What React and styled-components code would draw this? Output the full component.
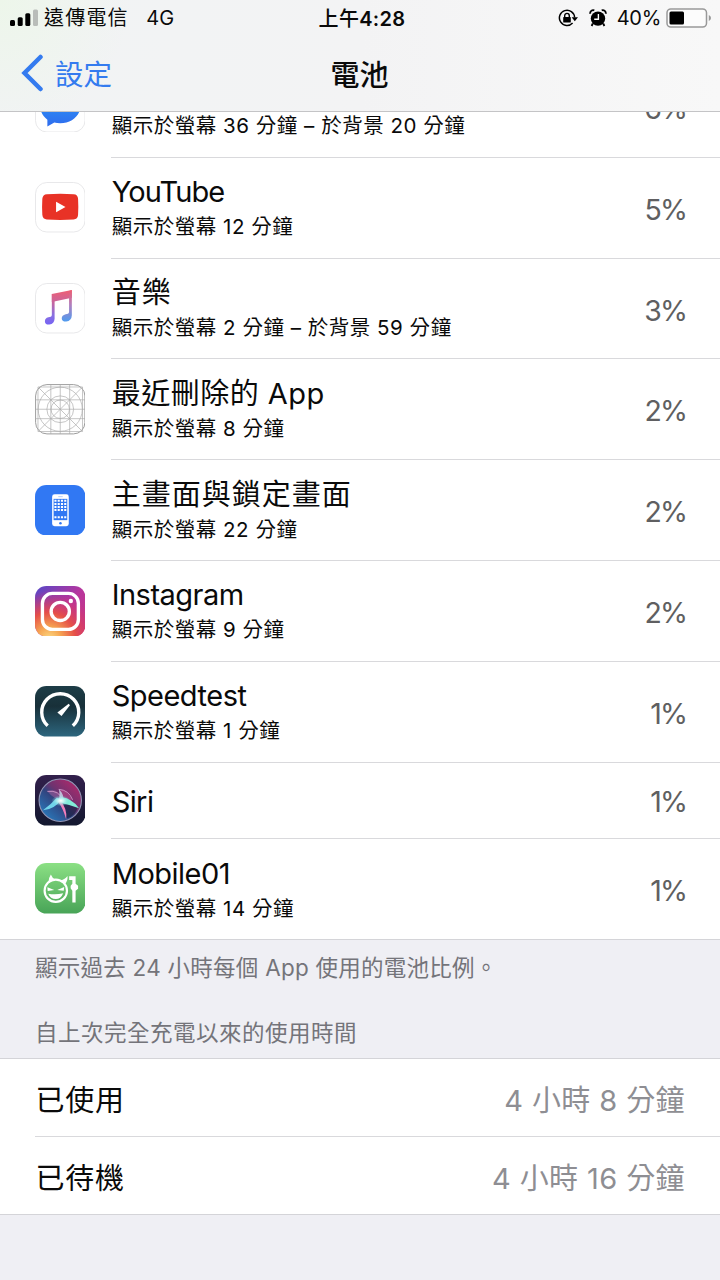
import styled, { createGlobalStyle } from "styled-components";

const GlobalStyle = createGlobalStyle`
  * {
    box-sizing: border-box;
  }
  body {
    margin: 0;
    background: #efeff4;
    font-family: Inter, "Noto Sans CJK TC", sans-serif;
    color: #0a0a0a;
  }
`;

const apps = [
  { icon: "messenger", name: "Messenger", detail: "顯示於螢幕 36 分鐘 – 於背景 20 分鐘", percent: "6%", tracking: -0.5 },
  { icon: "youtube", name: "YouTube", detail: "顯示於螢幕 12 分鐘", percent: "5%", tracking: -0.9 },
  { icon: "music", name: "音樂", detail: "顯示於螢幕 2 分鐘 – 於背景 59 分鐘", percent: "3%", tracking: 1 },
  { icon: "grid", name: "最近刪除的 App", detail: "顯示於螢幕 8 分鐘", percent: "2%", tracking: 0.5 },
  { icon: "home", name: "主畫面與鎖定畫面", detail: "顯示於螢幕 22 分鐘", percent: "2%", tracking: 1 },
  { icon: "instagram", name: "Instagram", detail: "顯示於螢幕 9 分鐘", percent: "2%", tracking: -0.5 },
  { icon: "speedtest", name: "Speedtest", detail: "顯示於螢幕 1 分鐘", percent: "1%", tracking: -0.5 },
  { icon: "siri", name: "Siri", percent: "1%", tracking: -0.6 },
  { icon: "mobile01", name: "Mobile01", detail: "顯示於螢幕 14 分鐘", percent: "1%", tracking: -0.5 },
];

const usage = [
  { label: "已使用", value: "4 小時 8 分鐘" },
  { label: "已待機", value: "4 小時 16 分鐘" },
];

const Outline = () => (
  <rect x="0.5" y="0.5" width="50" height="50" rx="11.5" fill="#fff" stroke="#e8e8ea" />
);

const drawings = {
  messenger: (
    <>
      <defs>
        <linearGradient id="msg" x1="0" y1="0" x2="0" y2="1">
          <stop offset="0" stopColor="#2aa5f8" />
          <stop offset="1" stopColor="#2f6bee" />
        </linearGradient>
      </defs>
      <Outline />
      <path
        d="M25.500 5C14 5 5 13 5 23.500C5 29.500 8 34.500 12.500 38V45L19.500 41Q22 41.600 25.500 41.600C37 41.600 46 34 46 23.500C46 13 37 5 25.500 5Z"
        fill="url(#msg)"
      />
      <path d="M14 29L23 19L28 24L37 19L28 29L23 24Z" fill="#fff" />
    </>
  ),
  youtube: (
    <>
      <Outline />
      <path
        d="M12 12.300Q25.500 11.300 39 12.300Q43.200 12.500 43.500 17Q44 25 43.500 33Q43.200 37.500 39 37.800Q25.500 38.800 12 37.800Q7.800 37.500 7.400 33Q6.900 25 7.400 17Q7.800 12.500 12 12.300Z"
        fill="#e83226"
      />
      <path d="M21.300 20V30.500L30.800 25.200Z" fill="#fff" />
    </>
  ),
  music: (
    <>
      <defs>
        <linearGradient id="note" gradientUnits="userSpaceOnUse" x1="26" y1="7" x2="26" y2="42">
          <stop offset="0" stopColor="#ef5f73" />
          <stop offset="0.35" stopColor="#c9659c" />
          <stop offset="0.72" stopColor="#8a70e0" />
          <stop offset="1" stopColor="#7563f4" />
        </linearGradient>
        <linearGradient id="noteRight" gradientUnits="userSpaceOnUse" x1="34" y1="7" x2="34" y2="40">
          <stop offset="0" stopColor="#ee5c70" />
          <stop offset="0.45" stopColor="#b27fbd" />
          <stop offset="1" stopColor="#489df3" />
        </linearGradient>
      </defs>
      <Outline />
      <path d="M17 11.200L37.200 7V15L17 19.200Z" fill="url(#note)" />
      <path d="M17 11.200H19.800V36Q19.500 41 14.500 42Q10 42.300 10 38.600Q10 35.500 13.500 34.600L16 34Q17 33.600 17 32Z" fill="url(#note)" />
      <path d="M34.400 8L37.200 7V32.500Q37 38 31.500 39Q27 39.100 27 35.600Q27 32.500 31 31.500L33.300 31Q34.400 30.600 34.400 29Z" fill="url(#noteRight)" />
    </>
  ),
  grid: (
    <g fill="none" stroke="#adadad" strokeWidth="0.7">
      <rect x="0.6" y="0.6" width="49.800" height="49.800" rx="11.500" stroke="#9c9c9c" strokeWidth="1" />
      <circle cx="25.500" cy="25.500" r="22.300" />
      <circle cx="25.500" cy="25.500" r="13.500" />
      <circle cx="25.500" cy="25.500" r="9.300" />
      <path d="M3 3V48M16 0.500V50.500M25.500 0.500V50.500M35 0.500V50.500M48 3V48M3 3H48M0.500 16H50.500M0.500 25.500H50.500M0.500 35H50.500M3 48H48M4 4L47 47M47 4L4 47" />
    </g>
  ),
  home: (
    <>
      <rect width="51" height="51" rx="11.500" fill="#3178f3" />
      <rect x="17.300" y="9.300" width="16.800" height="32.400" rx="2.500" fill="#fff" />
      <rect x="18.800" y="14" width="13.800" height="21.500" fill="#3178f3" />
      <path
        d="M19.600 16H32M19.600 19.100H32M19.600 22.200H32M19.600 25.300H32M19.600 32.500H32"
        stroke="#fff"
        strokeWidth="2"
        strokeDasharray="2.100 1.200"
      />
      <path d="M23.500 11.800H28" stroke="#9fc0fa" strokeWidth="0.8" />
      <circle cx="25.700" cy="38.600" r="1.300" fill="#3178f3" />
    </>
  ),
  instagram: (
    <>
      <defs>
        <linearGradient id="igBase" x1="0" y1="0" x2="1" y2="1">
          <stop offset="0" stopColor="#5448c8" />
          <stop offset="0.5" stopColor="#b8359d" />
          <stop offset="1" stopColor="#c93779" />
        </linearGradient>
        <radialGradient id="igWarm" cx="0.28" cy="1.05" r="0.95">
          <stop offset="0" stopColor="#fcdb83" />
          <stop offset="0.25" stopColor="#f6a552" />
          <stop offset="0.55" stopColor="#e54f49" />
          <stop offset="1" stopColor="#d6306f" stopOpacity="0" />
        </radialGradient>
      </defs>
      <rect width="51" height="51" rx="11.500" fill="url(#igBase)" />
      <rect width="51" height="51" rx="11.500" fill="url(#igWarm)" />
      <rect x="7.500" y="7.500" width="36.300" height="36.300" rx="10" fill="none" stroke="#fff" strokeWidth="3.400" />
      <circle cx="25.500" cy="25.700" r="9.200" fill="none" stroke="#fff" strokeWidth="3.400" />
      <circle cx="36.200" cy="15.200" r="2.200" fill="#fff" />
    </>
  ),
  speedtest: (
    <>
      <defs>
        <linearGradient id="speed" x1="0" y1="0" x2="0" y2="1">
          <stop offset="0" stopColor="#1d3d47" />
          <stop offset="0.4" stopColor="#183039" />
          <stop offset="1" stopColor="#2d667e" />
        </linearGradient>
      </defs>
      <rect width="51" height="51" rx="11.500" fill="url(#speed)" />
      <path d="M12.800 40.200A18.700 18.700 0 1 1 38.200 40.200" fill="none" stroke="#fff" strokeWidth="3.400" />
      <path d="M34 18L35.300 19.400L26.800 30.400L22.600 26.800Z" fill="#fff" />
    </>
  ),
  siri: (
    <>
      <defs>
        <linearGradient id="siriBg" x1="0" y1="0" x2="0" y2="1">
          <stop offset="0" stopColor="#32204c" />
          <stop offset="1" stopColor="#13182f" />
        </linearGradient>
        <linearGradient id="siriOrb" x1="0.8" y1="0.1" x2="0.15" y2="0.8">
          <stop offset="0" stopColor="#a52a6c" />
          <stop offset="0.4" stopColor="#6d336f" />
          <stop offset="0.6" stopColor="#31447f" />
          <stop offset="1" stopColor="#2a6fb0" />
        </linearGradient>
        <radialGradient id="siriGlow">
          <stop offset="0" stopColor="#fff" />
          <stop offset="0.4" stopColor="#c2f3f0" stopOpacity="0.8" />
          <stop offset="1" stopColor="#67d8dc" stopOpacity="0" />
        </radialGradient>
      </defs>
      <rect width="51" height="51" rx="11.500" fill="url(#siriBg)" />
      <circle cx="25.500" cy="25.500" r="21.400" fill="url(#siriOrb)" stroke="#9395b5" strokeWidth="1.100" />
      <path d="M28 28Q37 27 43 33Q41 41 32 44Q31 35 28 28Z" fill="#1c2145" opacity="0.7" />
      <path d="M12.500 16.500Q23 12 28 25Q19 25 12.500 16.500Z" fill="#b86caa" opacity="0.4" />
      <path d="M24 14.500Q33 15 38 25L27 25Z" fill="#c14c8d" opacity="0.5" />
      <path d="M12.500 16.500Q25 15 28 26M24 14.500Q34 15 38 25" fill="none" stroke="#d9a0d0" strokeWidth="0.8" />
      <path d="M27 22.500Q37 23.500 44.500 33.500Q35 30 25 28Z" fill="#83ecd8" />
      <path d="M27 24Q20 35 8 35.500Q16 30 22 23Z" fill="#70d3ea" />
      <path d="M25 25Q33 34 31.500 45Q28.500 34 24 28Z" fill="#f07fbb" />
      <path d="M24 14.500Q29.500 19 29 28L23 27Q26 21 24 14.500Z" fill="#c9e5f4" opacity="0.75" />
      <ellipse cx="26" cy="26" rx="9.500" ry="5.500" fill="url(#siriGlow)" />
    </>
  ),
  mobile01: (
    <>
      <defs>
        <linearGradient id="m01" x1="0" y1="0" x2="0" y2="1">
          <stop offset="0" stopColor="#8be084" />
          <stop offset="1" stopColor="#48a457" />
        </linearGradient>
      </defs>
      <rect width="51" height="51" rx="11.500" fill="url(#m01)" />
      <circle cx="21" cy="28" r="11.300" fill="none" stroke="#fff" strokeWidth="2.200" />
      <path d="M13.500 20Q13.500 15 16 11.500Q17.500 15.500 21 17ZM25 17.800Q30 17 32.800 13.200Q33.500 18 30 21.500Z" fill="#fff" />
      <path d="M12.500 24.500L19.500 27.300L12.800 28.300ZM22.500 27.300L29.500 24.200L29 28Z" fill="#fff" />
      <path d="M13.300 31Q21 32.500 28.500 30.500Q26 36.400 21 36.400Q15.500 36.200 13.300 31Z" fill="#fff" />
      <path d="M34.500 13.300H41V21L43.500 23V26L41 28V40H37.700V28L36 25.500V23L37.700 21V17.200H34.500Z" fill="#fff" />
    </>
  ),
};

const AppRow = ({ app }) => (
  <Row $short={!app.detail}>
    <AppIcon viewBox="0 0 51 51">{drawings[app.icon]}</AppIcon>
    <RowBody>
      <RowText $single={!app.detail}>
        <Name $tracking={app.tracking}>{app.name}</Name>
        {app.detail && <Detail>{app.detail}</Detail>}
      </RowText>
      <Percent>{app.percent}</Percent>
    </RowBody>
  </Row>
);

const AlarmIcon = () => (
  <svg width="18" height="18" viewBox="0 0 18 18">
    <circle cx="9" cy="9.600" r="7.200" fill="#000" />
    <path d="M1.300 4.800A3 3 0 0 1 5.300 1.300M12.700 1.300A3 3 0 0 1 16.700 4.800" fill="none" stroke="#000" strokeWidth="1.800" />
    <path d="M3.800 14.500L2.600 17M14.200 14.500L15.400 17" stroke="#000" strokeWidth="1.800" />
    <path d="M9.400 5V10.200H5.200" fill="none" stroke="#fff" strokeWidth="1.400" />
  </svg>
);

const LockIcon = () => (
  <svg width="20" height="18" viewBox="0 0 20 18">
    <path d="M14.600 14A7.600 7.600 0 1 1 16.600 8.500" fill="none" stroke="#000" strokeWidth="1.500" />
    <path d="M13.600 8.300H20L16.800 12.200Z" fill="#000" />
    <rect x="5.200" y="8" width="7.600" height="5.600" rx="0.7" fill="#000" />
    <path d="M6.700 8.500V6.700A2.300 2.300 0 0 1 11.300 6.700V8.500" fill="none" stroke="#000" strokeWidth="1.400" />
  </svg>
);

const BatteryIcon = () => (
  <svg width="46" height="20" viewBox="0 0 46 20">
    <rect x="1" y="1" width="39.500" height="18" rx="3.800" fill="#fcfcfc" stroke="#999" strokeWidth="1.500" />
    <rect x="3.500" y="3.500" width="14.500" height="13" rx="1.500" fill="#000" />
    <path d="M42.800 7Q45 8 45 10Q45 12 42.800 13Z" fill="#999" />
  </svg>
);

const SignalIcon = () => (
  <svg width="28" height="18" viewBox="0 0 28 18">
    <rect x="0" y="11" width="5" height="6" rx="1.500" fill="#000" />
    <rect x="7.700" y="8.300" width="5" height="8.700" rx="1.500" fill="#000" />
    <rect x="15.300" y="4.300" width="5" height="12.700" rx="1.500" fill="#000" />
    <rect x="23" y="0.500" width="5" height="16.500" rx="1.500" fill="#b9bdb9" />
  </svg>
);

const App = () => {
  return (
    <Screen>
      <GlobalStyle />
      <Header>
        <StatusBar>
          <StatusLeft>
            <SignalIcon />
            <Carrier>遠傳電信</Carrier>
            <Network>4G</Network>
          </StatusLeft>
          <Clock>
            <Period>上午</Period>4:28
          </Clock>
          <StatusRight>
            <LockIcon />
            <AlarmIcon />
            <Level>40%</Level>
            <BatteryIcon />
          </StatusRight>
        </StatusBar>
        <NavBar>
          <Back>
            <svg width="22" height="38" viewBox="0 0 22 38">
              <path d="M19.500 3L3.500 19L19.500 35" fill="none" stroke="#347bef" strokeWidth="4.500" strokeLinecap="round" />
            </svg>
            設定
          </Back>
          <Title>電池</Title>
          <div />
        </NavBar>
      </Header>
      <AppList>
        {apps.map((app) => (
          <AppRow app={app} key={app.icon} />
        ))}
      </AppList>
      <Notes>
        <Note $tracking={0.25}>顯示過去 24 小時每個 App 使用的電池比例。</Note>
        <Note $tracking={0.5}>自上次完全充電以來的使用時間</Note>
      </Notes>
      <UsageList>
        {usage.map((item) => (
          <UsageRow key={item.label}>
            <UsageLabel>{item.label}</UsageLabel>
            <UsageValue>{item.value}</UsageValue>
          </UsageRow>
        ))}
      </UsageList>
    </Screen>
  );
};

export default App;

const Screen = styled.div`
  width: 720px;
  height: 1280px;
  overflow: hidden;
  display: flex;
  flex-direction: column;
  background: #efeff4;
`;

const Header = styled.header`
  flex: none;
  height: 112px;
  border-bottom: 1px solid #c4c4c6;
  background: radial-gradient(circle at 0 0, #edf6ea 0, rgba(237, 246, 234, 0) 130px),
    linear-gradient(90deg, #f1f3f4 0%, #f3f3f4 50%, #f8f8f8 100%);
`;

const StatusBar = styled.div`
  height: 36px;
  display: grid;
  grid-template-columns: 1fr auto 1fr;
  align-items: center;
  padding: 0 8px 0 10px;
  font-size: 20px;
`;

const StatusLeft = styled.div`
  display: flex;
  align-items: center;
`;

const Carrier = styled.span`
  margin-left: 6px;
  letter-spacing: 1.2px;
  line-height: 24px;
`;

const Network = styled.span`
  margin-left: 17.500px;
`;

const Clock = styled.span`
  font-weight: 600;
  letter-spacing: 0.3px;
  line-height: 24px;
  padding: 1px 0 0 2px;
`;

const Period = styled.span`
  font-weight: 500;
`;

const StatusRight = styled.div`
  display: flex;
  justify-content: flex-end;
  align-items: center;
  gap: 11px;
`;

const Level = styled.span`
  margin: 0 -6px 0 -1px;
  letter-spacing: -0.3px;
`;

const NavBar = styled.div`
  height: 75px;
  display: grid;
  grid-template-columns: 1fr auto 1fr;
  align-items: center;
  padding: 0 22px 2px 21px;
`;

const Back = styled.div`
  display: flex;
  align-items: center;
  gap: 12px;
  color: #347bef;
  font-size: 28.500px;
`;

const Title = styled.h1`
  margin: 0;
  font-size: 29px;
  font-weight: 500;
`;

const AppList = styled.div`
  flex: none;
  height: 828px;
  overflow: hidden;
  display: flex;
  flex-direction: column;
  justify-content: flex-end;
  background: #fff;
  border-bottom: 1px solid #d4d4d8;
`;

const RowBody = styled.div`
  flex: 1;
  height: 100%;
  margin-left: 26px;
  padding-right: 34px;
  display: flex;
  align-items: center;
  justify-content: space-between;
  border-bottom: 1px solid #d9d9dc;
`;

const Row = styled.div`
  flex: none;
  height: ${(props) => (props.$short ? "76.6px" : "100.8px")};
  display: flex;
  align-items: center;
  padding-left: 34.500px;

  &:last-child {
    height: 99.800px;
  }

  &:last-child ${RowBody} {
    border-bottom: none;
  }
`;

const AppIcon = styled.svg`
  flex: none;
  width: 50.500px;
  height: 50.500px;
  margin-bottom: 1px;
`;

const RowText = styled.div`
  display: flex;
  flex-direction: column;
  padding-left: 0.7px;
  padding-top: ${(props) => (props.$single ? "3px" : "0")};
`;

const Name = styled.div`
  font-size: 29px;
  line-height: 38px;
  letter-spacing: ${(props) => props.$tracking}px;
  white-space: nowrap;
`;

const Detail = styled.div`
  font-size: 20.500px;
  line-height: 31px;
  letter-spacing: 0.52px;
  white-space: nowrap;
`;

const Percent = styled.div`
  padding-top: 3px;
  font-size: 28.500px;
  letter-spacing: -1.900px;
  color: #5f5f61;
`;

const Notes = styled.div`
  flex: none;
  height: 118px;
  padding: 12px 35px 9px;
  display: flex;
  flex-direction: column;
  justify-content: space-between;
`;

const Note = styled.p`
  margin: 0;
  font-size: 22.500px;
  line-height: 32px;
  letter-spacing: ${(props) => props.$tracking}px;
  color: #74747a;
`;

const UsageList = styled.div`
  flex: none;
  background: #fff;
  border-top: 1px solid #d4d4d8;
  border-bottom: 1px solid #d4d4d8;
`;

const UsageRow = styled.div`
  height: 78px;
  margin-left: 35px;
  padding-right: 35px;
  display: flex;
  align-items: center;
  justify-content: space-between;
  font-size: 29px;

  &:first-child {
    height: 77px;
  }

  & + & {
    border-top: 1px solid #d9d9dc;
  }
`;

const UsageLabel = styled.span`
  letter-spacing: 0.8px;
  padding-left: 0.5px;
`;

const UsageValue = styled.span`
  letter-spacing: 0.4px;
  color: #8e8e93;
`;
